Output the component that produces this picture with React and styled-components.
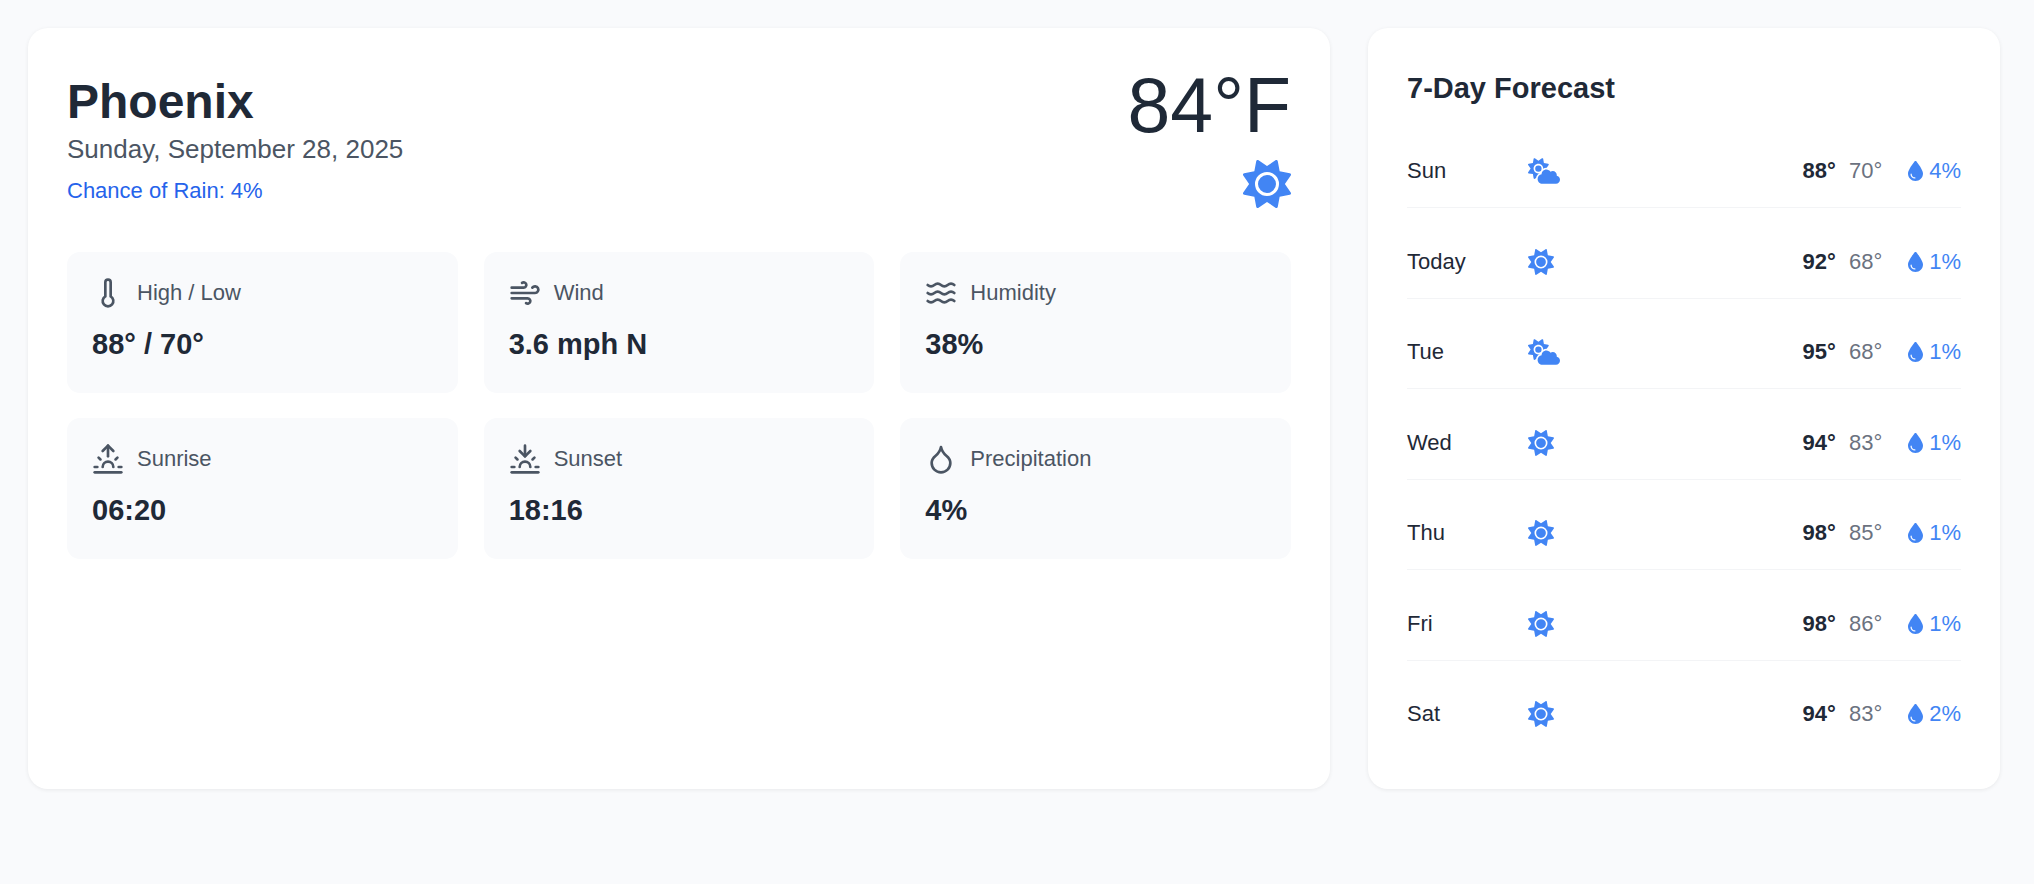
import React from "react";
import styled, { createGlobalStyle } from "styled-components";
import { Thermometer, Wind, Waves, Sunrise, Sunset, Droplet } from "lucide-react";
import { FaSun, FaCloudSun, FaDroplet } from "react-icons/fa6";

const GlobalStyle = createGlobalStyle`
  *, *::before, *::after { box-sizing: border-box; }
  body {
    margin: 0;
    background: #f9fafc;
    color: #1f2937;
    font-family: "Liberation Sans", Arial, Helvetica, sans-serif;
  }
  h1, h2, p, dl, dt, dd, ul { margin: 0; padding: 0; }
`;

const Page = styled.main`
  display: flex;
  min-height: 100vh;
  padding: 28px 34px 95px 28px;
`;

const Dashboard = styled.div`
  flex: 1;
  display: grid;
  grid-template-columns: repeat(3, minmax(0, 1fr));
  gap: 38px;
`;

const Panel = styled.section`
  grid-column: span ${(p) => p.$span};
  display: flex;
  flex-direction: column;
  padding: 39px;
  background: #ffffff;
  border-radius: 20px;
  box-shadow: 0 1px 4px rgba(0, 0, 0, 0.07);
`;

const Header = styled.header`
  display: flex;
  justify-content: space-between;
  align-items: flex-start;
  margin-bottom: 44px;
`;

const Place = styled.div`
  padding-top: 7px;
`;

const City = styled.h1`
  font-size: 48px;
  line-height: 56px;
  font-weight: 700;
`;

const DateLine = styled.p`
  margin-top: 3px;
  font-size: 26px;
  line-height: 32px;
  color: #4b5563;
`;

const RainChance = styled.p`
  margin-top: 12px;
  font-size: 22px;
  line-height: 28px;
  color: #2563eb;
`;

const Current = styled.div`
  display: flex;
  flex-direction: column;
  align-items: flex-end;
  gap: 17px;
`;

const Temperature = styled.p`
  font-size: 77px;
  line-height: 76px;
`;

const WeatherIcon = styled.span`
  display: flex;
  color: #4285f4;
  svg {
    width: ${(p) => p.$width}px;
    height: ${(p) => p.$height}px;
  }
`;

const Stats = styled.dl`
  display: grid;
  grid-template-columns: repeat(3, minmax(0, 1fr));
  gap: 25px 26px;
`;

const Stat = styled.div`
  padding: 25px;
  border-radius: 13px;
  background: #f9fafc;
`;

const StatLabel = styled.dt`
  display: flex;
  align-items: center;
  gap: 13px;
  font-size: 22px;
  line-height: 32px;
  color: #4b5563;
`;

const StatValue = styled.dd`
  margin-top: 11px;
  font-size: 29px;
  line-height: 48px;
  font-weight: 700;
`;

const PanelTitle = styled.h2`
  margin-bottom: 26px;
  font-size: 29px;
  line-height: 42px;
  font-weight: 700;
`;

const Days = styled.ul`
  flex: 1;
  display: flex;
  flex-direction: column;
  justify-content: space-between;
  list-style: none;
`;

const DayRow = styled.li`
  display: flex;
  align-items: center;
  padding: 20px 0;
  font-size: 22px;
  line-height: 32px;
  &:not(:last-child) {
    border-bottom: 1px solid #f3f4f6;
  }
`;

const DayName = styled.span`
  width: 121px;
`;

const Temps = styled.span`
  display: flex;
  gap: 13px;
  margin-left: auto;
`;

const High = styled.span`
  font-weight: 700;
`;

const Low = styled.span`
  color: #6b7280;
`;

const Rain = styled.span`
  display: flex;
  align-items: center;
  gap: 6px;
  margin-left: 26px;
  color: #4285f4;
  svg {
    width: 15px;
    height: 20px;
  }
`;

const stats = [
  { icon: Thermometer, label: "High / Low", value: "88° / 70°" },
  { icon: Wind, label: "Wind", value: "3.6 mph N" },
  { icon: Waves, label: "Humidity", value: "38%" },
  { icon: Sunrise, label: "Sunrise", value: "06:20" },
  { icon: Sunset, label: "Sunset", value: "18:16" },
  { icon: Droplet, label: "Precipitation", value: "4%" },
];

const conditions = {
  sunny: { icon: FaSun, width: 26 },
  partlyCloudy: { icon: FaCloudSun, width: 32 },
};

const days = [
  { name: "Sun", condition: "partlyCloudy", high: 88, low: 70, rain: 4 },
  { name: "Today", condition: "sunny", high: 92, low: 68, rain: 1 },
  { name: "Tue", condition: "partlyCloudy", high: 95, low: 68, rain: 1 },
  { name: "Wed", condition: "sunny", high: 94, low: 83, rain: 1 },
  { name: "Thu", condition: "sunny", high: 98, low: 85, rain: 1 },
  { name: "Fri", condition: "sunny", high: 98, low: 86, rain: 1 },
  { name: "Sat", condition: "sunny", high: 94, low: 83, rain: 2 },
];

function Day({ name, condition, high, low, rain }) {
  const { icon: Icon, width } = conditions[condition];
  return (
    <DayRow>
      <DayName>{name}</DayName>
      <WeatherIcon $width={width} $height={26}>
        <Icon />
      </WeatherIcon>
      <Temps>
        <High>{high}°</High>
        <Low>{low}°</Low>
      </Temps>
      <Rain>
        <FaDroplet />
        {rain}%
      </Rain>
    </DayRow>
  );
}

export default function App() {
  return (
    <>
      <GlobalStyle />
      <Page>
        <Dashboard>
          <Panel $span={2}>
            <Header>
              <Place>
                <City>Phoenix</City>
                <DateLine>Sunday, September 28, 2025</DateLine>
                <RainChance>Chance of Rain: 4%</RainChance>
              </Place>
              <Current>
                <Temperature>84°F</Temperature>
                <WeatherIcon $width={48} $height={48}>
                  <FaSun />
                </WeatherIcon>
              </Current>
            </Header>
            <Stats>
              {stats.map(({ icon: Icon, label, value }) => (
                <Stat key={label}>
                  <StatLabel>
                    <Icon size={32} />
                    {label}
                  </StatLabel>
                  <StatValue>{value}</StatValue>
                </Stat>
              ))}
            </Stats>
          </Panel>
          <Panel $span={1}>
            <PanelTitle>7-Day Forecast</PanelTitle>
            <Days>
              {days.map((day) => (
                <Day key={day.name} {...day} />
              ))}
            </Days>
          </Panel>
        </Dashboard>
      </Page>
    </>
  );
}
